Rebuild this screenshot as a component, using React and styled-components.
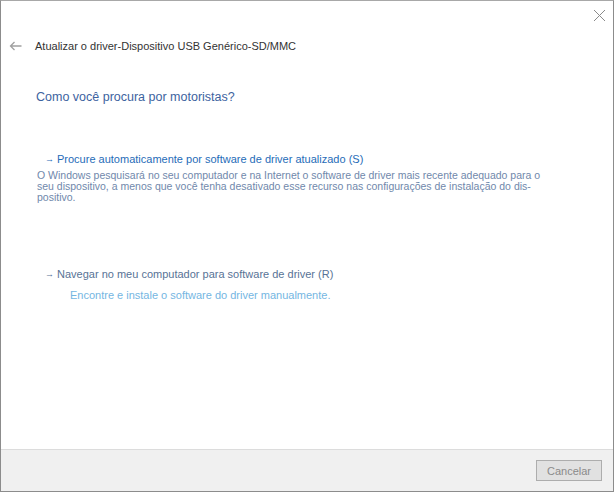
import React from "react"
import styled, { createGlobalStyle } from "styled-components"

const Global = createGlobalStyle`
  html, body {
    margin: 0;
    padding: 0;
    background: #ffffff;
  }
  body {
    font-family: "Liberation Sans", Arial, sans-serif;
  }
`

const Window = styled.div`
  box-sizing: border-box;
  width: 614px;
  height: 492px;
  border: 1px solid #8c8c8c;
  border-top-color: #a8a8a8;
  background: #ffffff;
  display: flex;
  flex-direction: column;
`

const TopBar = styled.div`
  height: 30px;
  display: flex;
  justify-content: flex-end;
  align-items: flex-start;
  padding: 7px 7px 0 0;
  box-sizing: border-box;
`

const CloseButton = styled.div`
  width: 14px;
  height: 14px;
  display: flex;
  align-items: center;
  justify-content: center;
`

const Content = styled.div`
  flex: 1;
  display: flex;
  flex-direction: column;
`

const TitleRow = styled.div`
  display: flex;
  align-items: center;
  height: 29px;
  padding-left: 8px;
  gap: 13px;
`

const Title = styled.div`
  font-size: 11px;
  color: #333333;
`

const Heading = styled.div`
  margin: 30px 0 0 35px;
  font-size: 12.5px;
  color: #3d63a0;
`

const Option = styled.div`
  display: flex;
  align-items: center;
  gap: 3px;
  margin-left: ${(p) => p.$indent}px;
  margin-top: ${(p) => p.$top}px;
  font-size: 11px;
  color: ${(p) => p.$color};
`

const Arrow = styled.span`
  font-size: 9px;
  line-height: 1;
`

const Description = styled.div`
  margin: ${(p) => p.$top}px 0 0 ${(p) => p.$indent}px;
  font-size: ${(p) => p.$size}px;
  line-height: 11px;
  white-space: nowrap;
  color: ${(p) => p.$color};
`

const Footer = styled.div`
  height: 41px;
  background: #f0f0f0;
  border-top: 1px solid #dcdcdc;
  display: flex;
  justify-content: flex-end;
  align-items: center;
  padding-right: 11px;
`

const CancelButton = styled.div`
  box-sizing: border-box;
  width: 66px;
  height: 21px;
  background: #e1e1e1;
  border: 1px solid #adadad;
  color: #8a8a8a;
  font-size: 11px;
  display: flex;
  align-items: center;
  justify-content: center;
`

const App = () => {
  return (
    <>
      <Global />
      <Window>
        <TopBar>
          <CloseButton>
            <svg width="13" height="13" viewBox="0 0 13 13">
              <path d="M1 1L12 12M12 1L1 12" stroke="#8a8a8a" strokeWidth="1" fill="none" />
            </svg>
          </CloseButton>
        </TopBar>
        <Content>
          <TitleRow>
            <svg width="13" height="10" viewBox="0 0 13 10">
              <path d="M12.5 5H1.5M5.5 1L1.5 5L5.5 9" stroke="#a0a0a0" strokeWidth="1.3" fill="none" />
            </svg>
            <Title>Atualizar o driver-Dispositivo USB Genérico-SD/MMC</Title>
          </TitleRow>
          <Heading>Como você procura por motoristas?</Heading>
          <Option $indent={44} $top={49} $color="#1f6cb8">
            <Arrow>→</Arrow>
            Procure automaticamente por software de driver atualizado (S)
          </Option>
          <Description $indent={36} $top={5} $size={10.5} $color="#7088ab">
            O Windows pesquisará no seu computador e na Internet o software de driver mais recente adequado para o
            <br />
            seu dispositivo, a menos que você tenha desativado esse recurso nas configurações de instalação do dis-
            <br />
            positivo.
          </Description>
          <Option $indent={44} $top={65} $color="#587396">
            <Arrow>→</Arrow>
            Navegar no meu computador para software de driver (R)
          </Option>
          <Description $indent={69} $top={10} $size={11} $color="#74b6e2">
            Encontre e instale o software do driver manualmente.
          </Description>
        </Content>
        <Footer>
          <CancelButton>Cancelar</CancelButton>
        </Footer>
      </Window>
    </>
  )
}

export default App
